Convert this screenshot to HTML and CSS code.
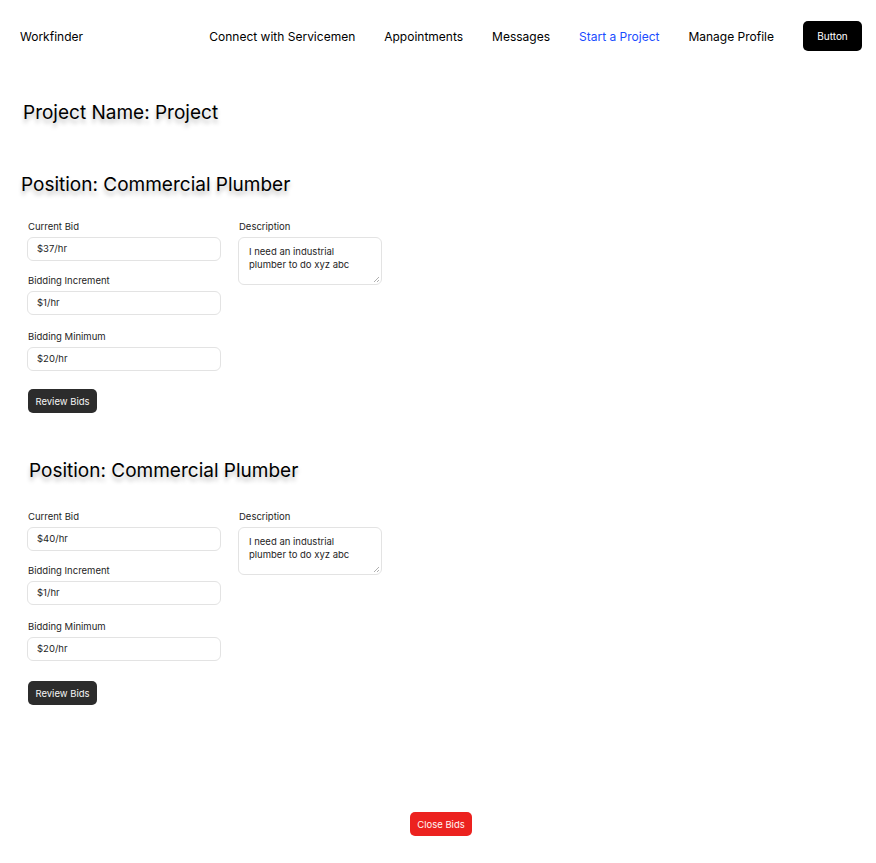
FILE: index.html
```html
<!DOCTYPE html>
<html>
<head>
<meta charset="utf-8">
<link rel="stylesheet" href="styles.css">
</head>
<body>
<header class="nav">
  <div class="brand">Workfinder</div>
  <nav class="links">
    <a class="link">Connect with Servicemen</a>
    <a class="link">Appointments</a>
    <a class="link">Messages</a>
    <a class="link active">Start a Project</a>
    <a class="link">Manage Profile</a>
    <button class="btn-black">Button</button>
  </nav>
</header>
<main class="main">
  <h1 class="project-title">Project Name: Project</h1>

  <section class="position first">
    <h2 class="pos-title">Position: Commercial Plumber</h2>
    <div class="form">
      <div class="col-left">
        <label class="lbl">Current Bid</label>
        <div class="field">$37/hr</div>
        <label class="lbl l2">Bidding Increment</label>
        <div class="field">$1/hr</div>
        <label class="lbl l3">Bidding Minimum</label>
        <div class="field">$20/hr</div>
        <button class="btn-dark">Review Bids</button>
      </div>
      <div class="col-right">
        <label class="lbl">Description</label>
        <div class="textarea">I need an industrial plumber to do xyz abc<span class="grip"></span></div>
      </div>
    </div>
  </section>

  <section class="position second">
    <h2 class="pos-title">Position: Commercial Plumber</h2>
    <div class="form">
      <div class="col-left">
        <label class="lbl">Current Bid</label>
        <div class="field">$40/hr</div>
        <label class="lbl l2">Bidding Increment</label>
        <div class="field">$1/hr</div>
        <label class="lbl l3">Bidding Minimum</label>
        <div class="field">$20/hr</div>
        <button class="btn-dark b2">Review Bids</button>
      </div>
      <div class="col-right">
        <label class="lbl">Description</label>
        <div class="textarea">I need an industrial plumber to do xyz abc<span class="grip"></span></div>
      </div>
    </div>
  </section>

  <div class="close-wrap">
    <button class="btn-red">Close Bids</button>
  </div>
</main>
</body>
</html>
```
FILE: styles.css
```css
* { box-sizing: border-box; }
body {
  margin: 0;
  font-family: Inter, "Noto Sans", sans-serif;
  color: #000;
  background: #fff;
}
.nav {
  height: 72px;
  display: flex;
  align-items: center;
  justify-content: space-between;
  padding: 0 14px 0 20px;
}
.brand { font-size: 12px; }
.links {
  display: flex;
  align-items: center;
  gap: 29px;
}
.link { font-size: 12px; color: #000; text-decoration: none; }
.link.active { color: #1a4dff; }
.btn-black {
  background: #000;
  color: #fff;
  border: none;
  border-radius: 5px;
  width: 59px;
  height: 30px;
  font-family: inherit;
  font-size: 10px;
  padding: 0;
}
.main { display: flex; flex-direction: column; }
.project-title {
  margin: 29px 0 0 23px;
  font-size: 19px;
  line-height: 24px;
  font-weight: 400;
  text-shadow: 0 4px 4px rgba(0,0,0,0.25);
}
.pos-title {
  margin: 0;
  font-size: 19px;
  line-height: 24px;
  font-weight: 400;
  text-shadow: 0 4px 4px rgba(0,0,0,0.25);
}
.position.first { margin-top: 48px; padding-left: 21px; }
.position.second { margin-top: 46px; padding-left: 29px; }
.first .form { margin-top: 24px; padding-left: 6px; }
.second .form { margin-top: 28px; margin-left: -2px; }
.form { display: flex; gap: 17px; }
.col-left { display: flex; flex-direction: column; width: 194px; }
.col-right { display: flex; flex-direction: column; }
.lbl {
  font-size: 9.5px;
  line-height: 12px;
  color: #1e1e1e;
  padding-left: 1px;
  margin-bottom: 4px;
}
.l2 { margin-top: 14px; }
.l3 { margin-top: 16px; }
.field {
  height: 24px;
  border: 1px solid #e3e3e3;
  border-radius: 6px;
  font-size: 9.5px;
  line-height: 22px;
  padding-left: 9px;
  color: #1e1e1e;
}
.textarea {
  position: relative;
  width: 144px;
  height: 48px;
  border: 1px solid #e3e3e3;
  border-radius: 6px;
  font-size: 9.5px;
  line-height: 13px;
  padding: 7px 10px;
  color: #1e1e1e;
}
.grip {
  position: absolute;
  right: 2px;
  bottom: 2px;
  width: 5px;
  height: 5px;
  background: linear-gradient(135deg, transparent 45%, #b0b0b0 45%, #b0b0b0 55%, transparent 55%, transparent 75%, #b0b0b0 75%, #b0b0b0 85%, transparent 85%);
}
.btn-dark {
  margin-top: 18px;
  align-self: flex-start;
  width: 69px;
  height: 24px;
  background: #2c2c2c;
  color: #f5f5f5;
  border: none;
  border-radius: 5px;
  font-family: inherit;
  font-size: 9.5px;
  padding: 0;
  margin-left: 1px;
}
.b2 { margin-top: 20px; }
.close-wrap {
  display: flex;
  justify-content: center;
  margin-top: 107px;
  padding-left: 6px;
}
.btn-red {
  width: 62px;
  height: 24px;
  background: #ec221f;
  color: #fff5f5;
  border: none;
  border-radius: 5px;
  font-family: inherit;
  font-size: 9.5px;
  padding: 0;
}
```
